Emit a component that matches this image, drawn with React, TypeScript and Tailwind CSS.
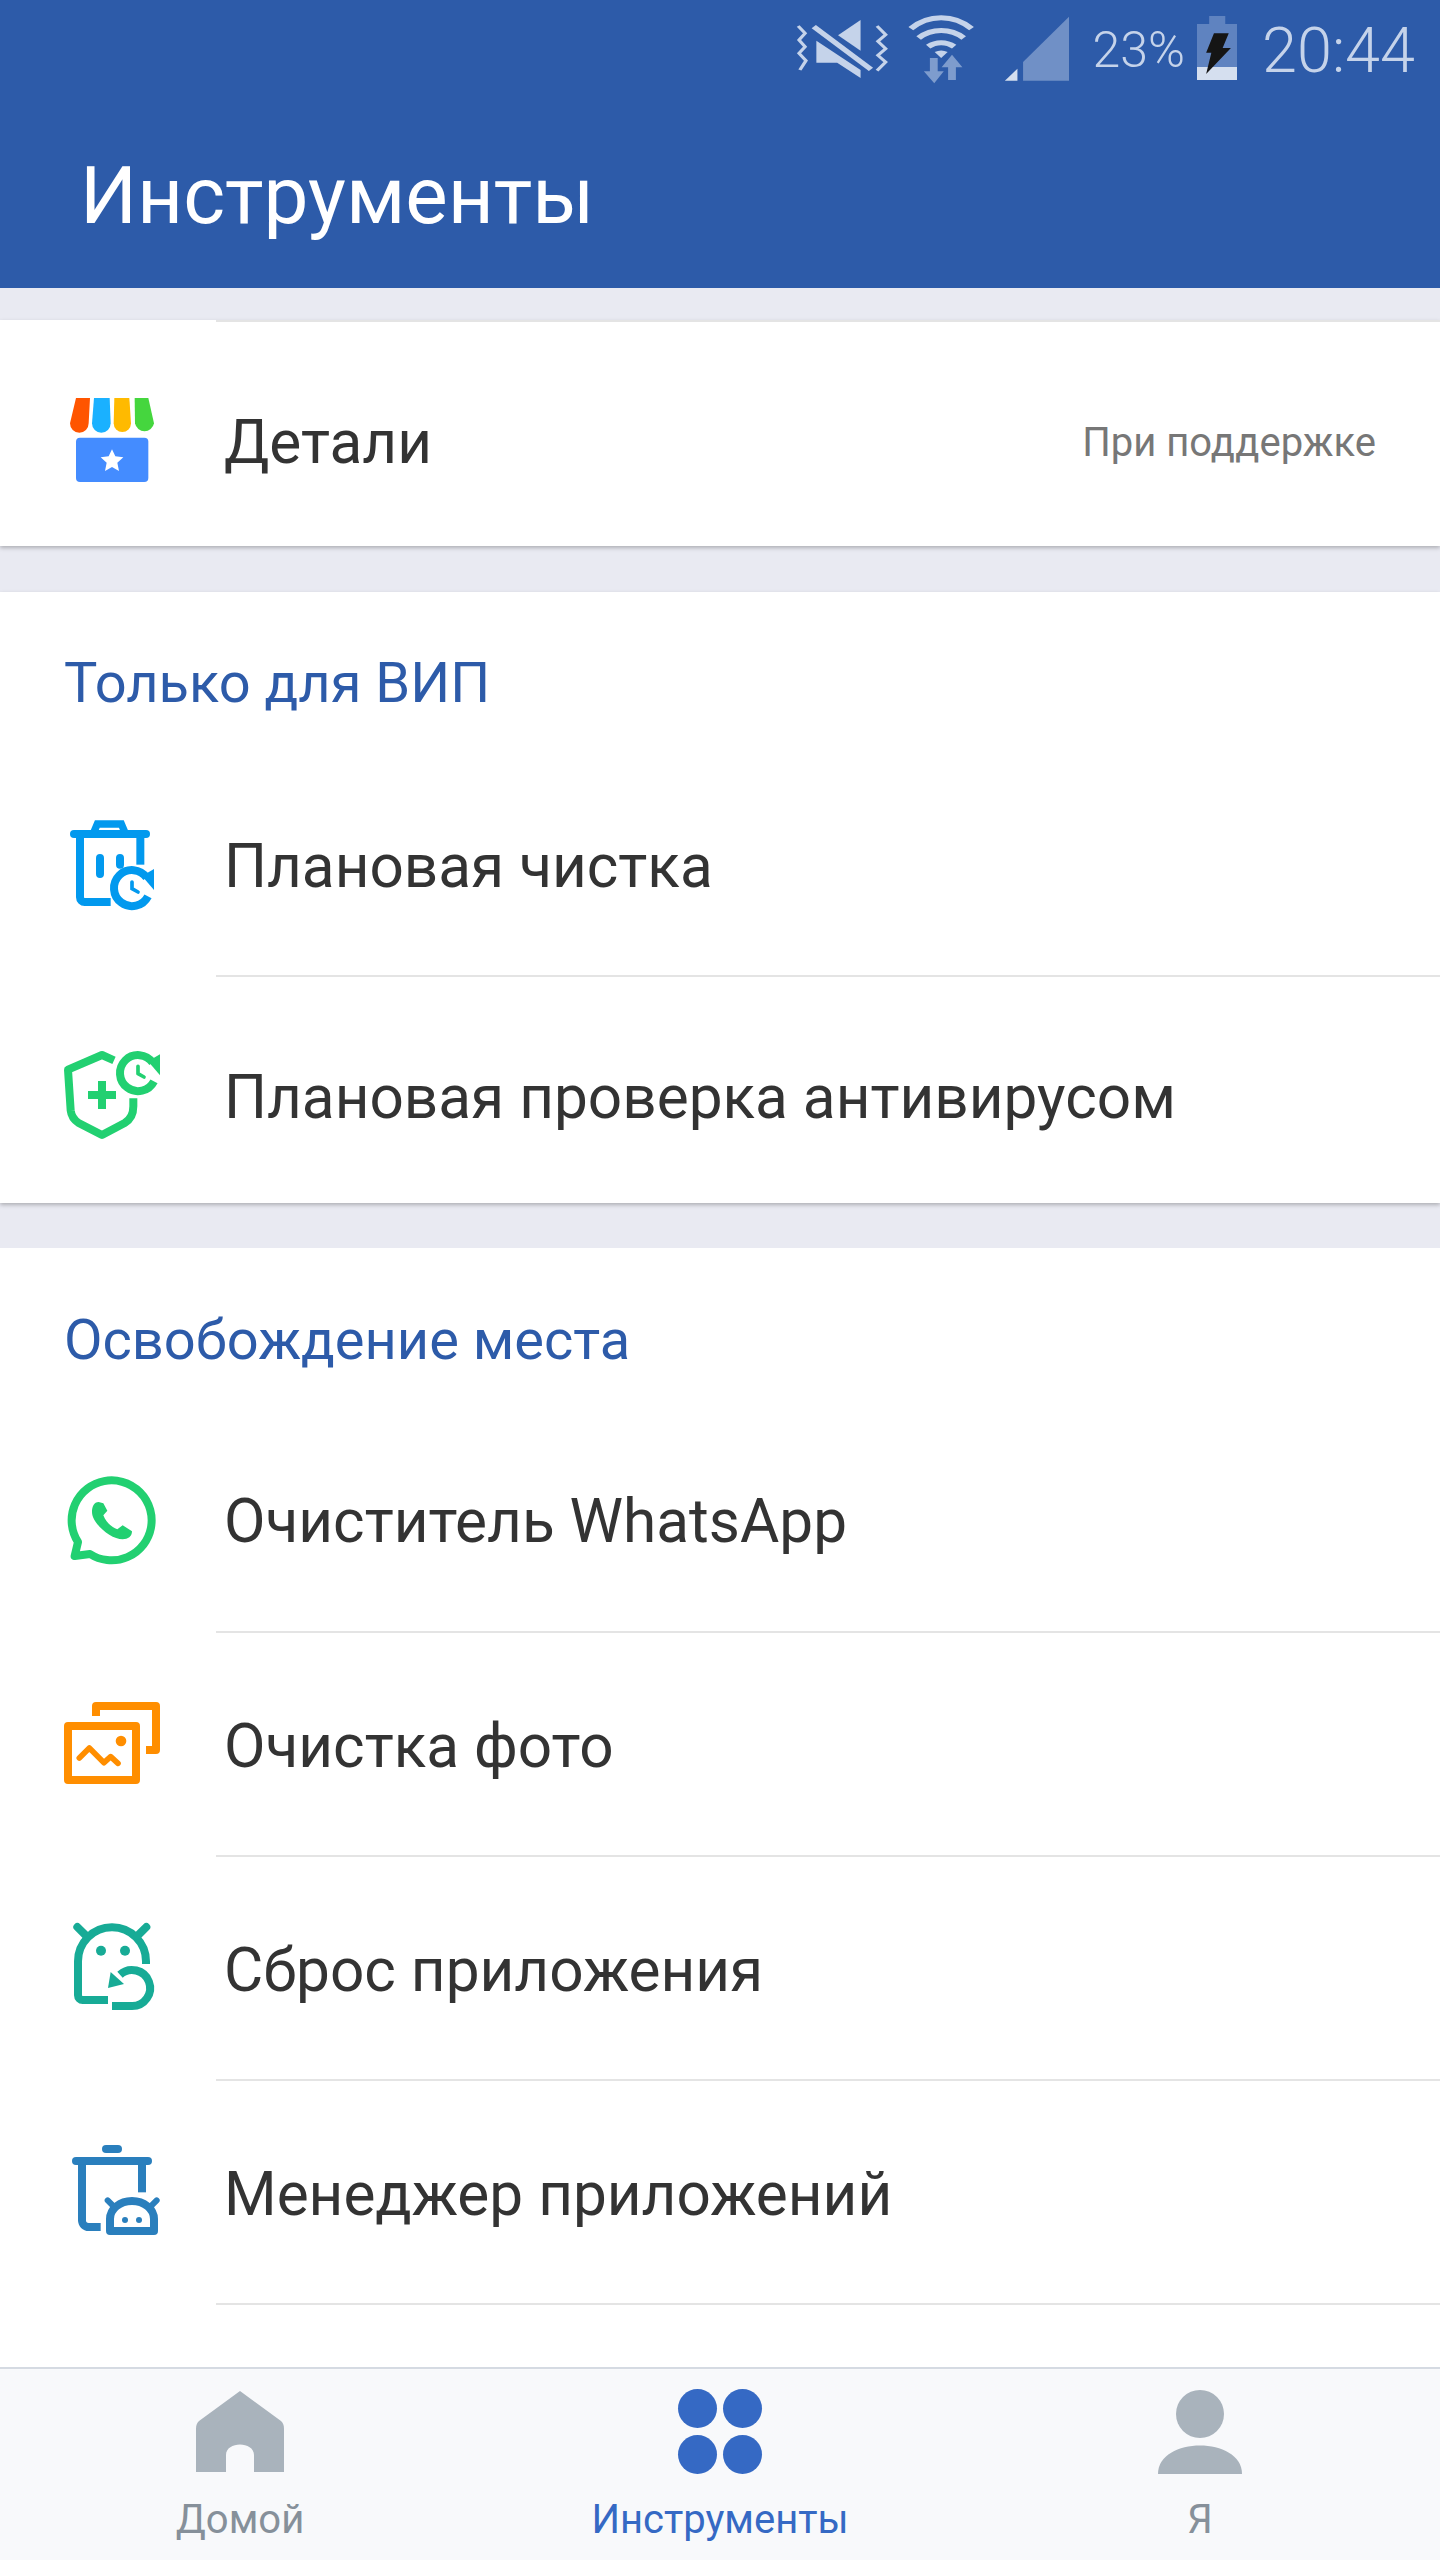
import React from 'react';

const font = { fontFamily: 'Roboto, sans-serif' };

function StatusIcons() {
  return (
    <svg className="w-[273px] h-[100px] shrink-0" viewBox="85 0 630 300" preserveAspectRatio="none">
      {/* vibrate + muted speaker */}
      <g fill="none" stroke="#c5d3ea" strokeWidth="8">
        <path d="M90 78l16 22-14 20 14 20-14 20 16 22-14 28" />
        <path d="M272 78l20 26-18 20 18 22-18 20 18 20-20 26" />
      </g>
      <path d="M234 60v92l-52-46z" fill="#c5d3ea" />
      <path d="M132 122l102 88v24l-54-46h-48z" fill="#c5d3ea" />
      <path d="M126 80l132 128" stroke="#c5d3ea" strokeWidth="14" />
      {/* wifi */}
      <g fill="none" stroke="#c5d3ea" strokeWidth="15">
        <path d="M350 86c40-44 100-44 140 0" />
        <path d="M368 114c30-30 74-30 104 0" />
        <path d="M390 140c18-16 42-16 60 0" />
      </g>
      <path d="M405 156c10-6 20-6 30 0l-15 18z" fill="#c5d3ea" />
      <path d="M394 174h18v40h14l-22 36-24-36h14z" fill="#7e9ccd" />
      <path d="M445 164l24 38h-15v38h-18v-38h-15z" fill="#7e9ccd" />
      {/* signal */}
      <path d="M715 50v192H609v-56z" fill="#7090c6" />
      <path d="M596 206v36h-29z" fill="#d5dfef" />
    </svg>
  );
}

function BatteryIcon() {
  return (
    <svg className="w-[40px] h-[100px] shrink-0" viewBox="1003 0 92 300" preserveAspectRatio="none">
      <path d="M1031 48h37v24h27v130h-92V72h28z" fill="#5f83c0" />
      <rect x="1003" y="201" width="92" height="39" fill="#d5dfef" />
      <path d="M1042 100h34l-14 44h19l-57 78 12-64h-12z" fill="#151515" />
    </svg>
  );
}

function ShopIcon() {
  return (
    <svg className="w-[160px] h-[120px] shrink-0" viewBox="120 330 480 360">
      <path d="M228 384h42l-4 76a27 27 0 0 1-56 0z" fill="#ff5500" />
      <path d="M282 384h47l3 76a28 28 0 0 1-56 0z" fill="#1ab1ff" />
      <path d="M343 384h45l5 76a26 26 0 0 1-52 0z" fill="#ffba00" />
      <path d="M404 384h41l17 76a29 29 0 0 1-57 0z" fill="#45d63e" />
      <rect x="228" y="503" width="217" height="133" rx="12" fill="#448cff" />
      <path d="M336 538l10 21 24 3-18 16 5 25-21-12-21 12 5-25-18-16 24-3z" fill="#fff" />
    </svg>
  );
}

function TrashClockIcon() {
  return (
    <svg className="w-[160px] h-[120px] shrink-0" viewBox="0 51 480 360" fill="none" stroke="#0299ee" strokeWidth="24" strokeLinecap="round">
      <path d="M102 132h216" />
      <path d="M160 130l12-28h72l12 28" strokeWidth="22" />
      <path d="M120 136v186a14 14 0 0 0 14 14h78" strokeLinecap="butt" />
      <path d="M301 136v88" strokeLinecap="butt" />
      <path d="M180 204v48M240 204v20" />
      <path d="M320 263A54 54 0 1 0 324 319" strokeLinecap="butt" />
      <path d="M342 237v63l-36-42z" fill="#0299ee" stroke="none" />
      <path d="M276 276v20l18 10" strokeWidth="11" />
    </svg>
  );
}

function ShieldClockIcon() {
  return (
    <svg className="w-[160px] h-[120px] shrink-0" viewBox="0 747 480 360" fill="none" stroke="#22d071" strokeWidth="24" strokeLinejoin="round">
      <path d="M222 814l-36-16-102 44 8 122c2 18 12 30 24 38l70 36 68-36c14-8 26-22 26-50v-24" />
      <path d="M186 876v84M144 918h84" />
      <path d="M338 821A54 54 0 1 0 342 877" />
      <path d="M360 796v63l-36-42z" fill="#22d071" stroke="none" />
      <path d="M294 832v22l18 10" strokeWidth="11" strokeLinecap="round" />
    </svg>
  );
}

function WhatsappIcon() {
  return (
    <svg className="w-[160px] h-[120px] shrink-0" viewBox="0 36 480 360">
      <path d="M150 312a120 120 0 1 0-36-36l-10 42z" fill="none" stroke="#22d071" strokeWidth="24" strokeLinejoin="round" />
      <path d="M176 156c-14 0-20 14-20 30 0 34 56 82 92 82 16 0 28-8 28-24l-28-18-16 12c-20-8-34-22-42-42l12-14-12-22z" fill="#22d071" />
    </svg>
  );
}

function PhotosIcon() {
  return (
    <svg className="w-[160px] h-[120px] shrink-0" viewBox="0 711 480 360" fill="none" stroke="#ff8e00" strokeWidth="24" strokeLinejoin="round">
      <path d="M168 804v-30h180v132h-30" />
      <rect x="84" y="834" width="204" height="162" />
      <circle cx="243" cy="879" r="16" fill="#ff8e00" stroke="none" />
      <path d="M118 930l30-30 44 44 20-18 22 20" strokeWidth="17" strokeLinecap="round" />
    </svg>
  );
}

function AppResetIcon() {
  return (
    <svg className="w-[160px] h-[120px] shrink-0" viewBox="0 93 480 360" fill="none" stroke="#17ab96" strokeWidth="24" strokeLinecap="round">
      <path d="M204 366h-76a14 14 0 0 1-14-14V250a102 102 0 0 1 204 0v8" strokeLinecap="butt" />
      <path d="M112 147l26 26M319 147l-26 26" />
      <circle cx="183" cy="218" r="15" fill="#17ab96" stroke="none" />
      <circle cx="255" cy="218" r="15" fill="#17ab96" stroke="none" />
      <path d="M240 290A54 54 0 1 1 276 384H216" strokeLinecap="butt" />
      <path d="M212 282l-8 48 48-12z" fill="#17ab96" stroke="none" />
    </svg>
  );
}

function AppManagerIcon() {
  return (
    <svg className="w-[160px] h-[120px] shrink-0" viewBox="0 762 480 360" fill="none" stroke="#2a7fbd" strokeWidth="24">
      <path d="M108 846h216" strokeLinecap="round" />
      <path d="M198 810h36" strokeLinecap="round" />
      <path d="M126 856v168a20 20 0 0 0 20 20h36" />
      <path d="M306 856v84" />
      <path d="M210 1056v-36a66 54 0 0 1 132 0v36z" strokeLinejoin="round" />
      <path d="M203 964l18 18M350 964l-18 18" strokeWidth="18" strokeLinecap="round" />
      <circle cx="255" cy="1023" r="9" fill="#2a7fbd" stroke="none" />
      <circle cx="297" cy="1023" r="9" fill="#2a7fbd" stroke="none" />
    </svg>
  );
}

function Row({ icon, label, divider, right, className }: { icon: React.ReactNode; label: string; divider?: boolean; right?: string; className?: string }) {
  return (
    <div className={`relative flex items-center ${className ?? 'h-[224px] [&>span]:mt-[4px]'}`}>
      <div className="ml-10">{icon}</div>
      <span className="ml-[24px] text-[60.3px] leading-none text-[#333333]">{label}</span>
      {right && <span className="ml-auto mr-[64px] text-[40px] text-[#777777]">{right}</span>}
      {divider && <div className="absolute bottom-0 left-[216px] right-0 h-[2px] bg-[#e4e4e4]" />}
    </div>
  );
}

function SectionTitle({ children }: { children: string }) {
  return <div className="pl-[64px] text-[56px] leading-none text-[#2d5ba9]">{children}</div>;
}

export default function App() {
  return (
    <div className="w-[1440px] h-[2560px] flex flex-col overflow-hidden bg-[#e9eaf2]" style={font}>
      {/* Header */}
      <header className="h-[288px] shrink-0 bg-[#2d5ba9]">
        <div className="h-[100px] flex items-center justify-end pr-[25px] text-[#c5d3ea]">
          <StatusIcons />
          <span className="ml-[24px] text-[50px] font-light leading-none">23%</span>
          <div className="ml-[12px]"><BatteryIcon /></div>
          <span className="ml-[25px] text-[63px] font-light leading-none">20:44</span>
        </div>
        <h1 className="pl-[80px] pt-[52px] text-[80px] leading-[88px] font-normal text-white">Инструменты</h1>
      </header>

      <main className="flex-1 min-h-0 pt-8 overflow-hidden">
        {/* Details card */}
        <section className="relative bg-white shadow-[0_2px_4px_rgba(0,0,0,0.25)] pt-[14px]">
          <div className="absolute top-0 left-[216px] right-0 h-[2px] bg-[#e4e4e4]" />
          <Row icon={<ShopIcon />} label="Детали" right="При поддержке" className="h-[212px] [&>span]:mt-[6px]" />
        </section>

        {/* VIP */}
        <section className="mt-[46px] bg-white shadow-[0_2px_4px_rgba(0,0,0,0.25)] pt-[63px]">
          <SectionTitle>Только для ВИП</SectionTitle>
          <Row icon={<TrashClockIcon />} label="Плановая чистка" divider className="h-[266px] pt-[46px]" />
          <Row icon={<ShieldClockIcon />} label="Плановая проверка антивирусом" className="h-[226px] pt-[16px]" />
        </section>

        {/* Free space */}
        <section className="mt-[45px] bg-white pt-[64px] h-[1200px]">
          <SectionTitle>Освобождение места</SectionTitle>
          <Row icon={<WhatsappIcon />} label="Очиститель WhatsApp" divider className="h-[265px] pt-[43px]" />
          <Row icon={<PhotosIcon />} label="Очистка фото" divider />
          <Row icon={<AppResetIcon />} label="Сброс приложения" divider />
          <Row icon={<AppManagerIcon />} label="Менеджер приложений" divider />
        </section>
      </main>

      {/* Bottom nav */}
      <nav className="h-[193px] shrink-0 grid grid-cols-3 bg-[#f8f9fb] border-t-2 border-[#d5dae2]">
        <div className="flex flex-col items-center pt-[20px]">
          <svg className="w-[90px] h-[86px]" viewBox="0 0 90 86">
            <path d="M45 2L86 32c2 2 3 4 3 8v43H59V66c0-14-28-14-28 0v17H1V40c0-4 1-6 3-8z" fill="#a9b3bc" />
          </svg>
          <span className="mt-[23px] text-[40px] leading-[44px] text-[#86909a]">Домой</span>
        </div>
        <div className="flex flex-col items-center pt-[20px]">
          <div className="grid grid-cols-2 gap-[6px] w-[84px] h-[86px]">
            <div className="w-[39px] h-[39px] rounded-full bg-[#3569c4]" />
            <div className="w-[39px] h-[39px] rounded-full bg-[#3569c4]" />
            <div className="w-[39px] h-[39px] rounded-full bg-[#3569c4]" />
            <div className="w-[39px] h-[39px] rounded-full bg-[#3569c4]" />
          </div>
          <span className="mt-[23px] text-[40px] leading-[44px] text-[#3569c4]">Инструменты</span>
        </div>
        <div className="flex flex-col items-center pt-[20px]">
          <svg className="w-[86px] h-[86px]" viewBox="0 0 86 86">
            <circle cx="43" cy="25" r="24" fill="#a9b3bc" />
            <path d="M1 85c0-38 84-38 84 0z" fill="#a9b3bc" />
          </svg>
          <span className="mt-[23px] text-[40px] leading-[44px] text-[#86909a]">Я</span>
        </div>
      </nav>
    </div>
  );
}
